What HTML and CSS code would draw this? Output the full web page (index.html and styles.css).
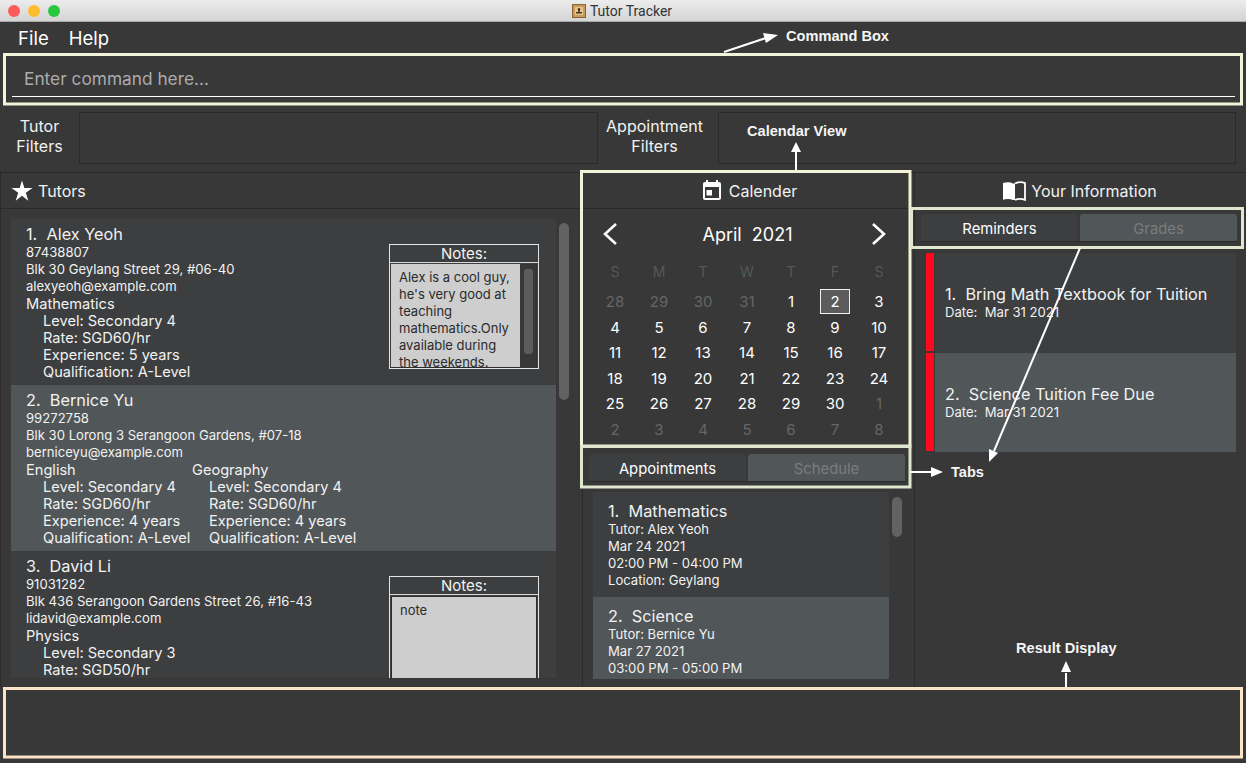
FILE: index.html
```html
<!DOCTYPE html>
<html lang="en">
<head>
  <meta charset="UTF-8" />
  <title>Tutor Tracker</title>
  <link rel="stylesheet" href="styles.css">
</head>
<body>
  <div class="window">
    <div class="titlebar">
      <span class="light red"></span>
      <span class="light yellow"></span>
      <span class="light green"></span>
      <div class="title">
        <svg class="title-icon" width="14" height="14" viewBox="0 0 14 14">
          <rect x="0.5" y="0.5" width="13" height="13" fill="#c99a5b" stroke="#8a6534"/>
          <rect x="3" y="3" width="8" height="8" fill="#e8c690"/>
          <path d="M7 4a1.4 1.4 0 0 1 .8 2.5V8H10v1.5H4V8h2.2V6.5A1.4 1.4 0 0 1 7 4z" fill="#4a3418"/>
        </svg>
        Tutor Tracker
      </div>
    </div>

    <div class="menubar">
      <span>File</span>
      <span>Help</span>
    </div>

    <div class="commandbox">
      <div class="commandinput">Enter command here...</div>
    </div>

    <div class="filters">
      <div class="filter-label tutor-label">Tutor<br>Filters</div>
      <div class="filter-box tutor-box"></div>
      <div class="filter-label appt-label">Appointment<br>Filters</div>
      <div class="filter-box"></div>
    </div>

    <div class="main">
      <section class="col col-tutors">
        <header class="col-head tutors-head">
          <svg width="22" height="22" viewBox="0 0 22 22"><polygon points="11,.5 13.350,8 21.500,8 14.800,12.800 17.300,20.800 11,15.800 4.700,20.800 7.200,12.800 .5,8 8.650,8" fill="#fff"/></svg>
          Tutors
        </header>
        <div class="list tutor-list">
          <div class="cards">
            <article class="card tutor">
              <div class="info">
                <div class="name">1.&nbsp; Alex Yeoh</div>
                <div class="small">87438807</div>
                <div class="small">Blk 30 Geylang Street 29, #06-40</div>
                <div class="small">alexyeoh@example.com</div>
                <div class="subjects">
                  <div class="subject">
                    <div>Mathematics</div>
                    <div class="detail">Level: Secondary 4</div>
                    <div class="detail">Rate: SGD60/hr</div>
                    <div class="detail">Experience: 5 years</div>
                    <div class="detail">Qualification: A-Level</div>
                  </div>
                </div>
              </div>
              <div class="notes">
                <div class="notes-head">Notes:</div>
                <div class="notes-body">
                  <div class="notes-text">Alex is a cool guy, he's very good at teaching mathematics.Only available during the weekends.</div>
                  <div class="notes-track"><div class="notes-thumb"></div></div>
                </div>
              </div>
            </article>

            <article class="card tutor even">
              <div class="info">
                <div class="name">2.&nbsp; Bernice Yu</div>
                <div class="small">99272758</div>
                <div class="small">Blk 30 Lorong 3 Serangoon Gardens, #07-18</div>
                <div class="small">berniceyu@example.com</div>
                <div class="subjects">
                  <div class="subject">
                    <div>English</div>
                    <div class="detail">Level: Secondary 4</div>
                    <div class="detail">Rate: SGD60/hr</div>
                    <div class="detail">Experience: 4 years</div>
                    <div class="detail">Qualification: A-Level</div>
                  </div>
                  <div class="subject">
                    <div>Geography</div>
                    <div class="detail">Level: Secondary 4</div>
                    <div class="detail">Rate: SGD60/hr</div>
                    <div class="detail">Experience: 4 years</div>
                    <div class="detail">Qualification: A-Level</div>
                  </div>
                </div>
              </div>
            </article>

            <article class="card tutor">
              <div class="info">
                <div class="name">3.&nbsp; David Li</div>
                <div class="small">91031282</div>
                <div class="small">Blk 436 Serangoon Gardens Street 26, #16-43</div>
                <div class="small">lidavid@example.com</div>
                <div class="subjects">
                  <div class="subject">
                    <div>Physics</div>
                    <div class="detail">Level: Secondary 3</div>
                    <div class="detail">Rate: SGD50/hr</div>
                  </div>
                </div>
              </div>
              <div class="notes">
                <div class="notes-head">Notes:</div>
                <div class="notes-body single">
                  <div class="notes-text">note</div>
                </div>
              </div>
            </article>
          </div>
          <div class="thumb tutor-thumb"></div>
        </div>
      </section>

      <section class="col col-center">
        <header class="col-head">
          <svg width="24" height="24" viewBox="0 0 24 24"><path d="M12 11H6.500v5.500H12V11zM16 1v2H8V1H6v2H5C3.890 3 3 3.900 3 5v14c0 1.100.89 2 2 2h14c1.100 0 2-.9 2-2V5c0-1.100-.9-2-2-2h-1V1h-2zm3 18H5V8h14v11z" fill="#fff"/></svg>
          Calender
        </header>
        <div class="calendar">
          <div class="month">
            <svg width="16" height="24" viewBox="0 0 16 24"><path d="M14 2L3 12l11 10" fill="none" stroke="#fff" stroke-width="2.600"/></svg>
            <span class="month-name">April&nbsp; 2021</span>
            <svg width="16" height="24" viewBox="0 0 16 24"><path d="M2 2l11 10L2 22" fill="none" stroke="#fff" stroke-width="2.600"/></svg>
          </div>
          <div class="weekdays">
            <span>S</span><span>M</span><span>T</span><span>W</span><span>T</span><span>F</span><span>S</span>
          </div>
          <div class="days">
            <span class="off">28</span><span class="off">29</span><span class="off">30</span><span class="off">31</span><span>1</span><span><b class="today">2</b></span><span>3</span>
            <span>4</span><span>5</span><span>6</span><span>7</span><span>8</span><span>9</span><span>10</span>
            <span>11</span><span>12</span><span>13</span><span>14</span><span>15</span><span>16</span><span>17</span>
            <span>18</span><span>19</span><span>20</span><span>21</span><span>22</span><span>23</span><span>24</span>
            <span>25</span><span>26</span><span>27</span><span>28</span><span>29</span><span>30</span><span class="off">1</span>
            <span class="off">2</span><span class="off">3</span><span class="off">4</span><span class="off">5</span><span class="off">6</span><span class="off">7</span><span class="off">8</span>
          </div>
        </div>
        <div class="tabs center-tabs">
          <div class="tab active">Appointments</div>
          <div class="tab">Schedule</div>
        </div>
        <div class="list appt-list">
          <div class="cards">
            <article class="card appt">
              <div class="name">1.&nbsp; Mathematics</div>
              <div class="small">Tutor: Alex Yeoh</div>
              <div class="small">Mar 24 2021</div>
              <div class="small">02:00 PM - 04:00 PM</div>
              <div class="small">Location: Geylang</div>
            </article>
            <article class="card appt even">
              <div class="name">2.&nbsp; Science</div>
              <div class="small">Tutor: Bernice Yu</div>
              <div class="small">Mar 27 2021</div>
              <div class="small">03:00 PM - 05:00 PM</div>
            </article>
          </div>
          <div class="thumb appt-thumb"></div>
        </div>
      </section>

      <section class="col col-info">
        <header class="col-head info-head">
          <svg width="24" height="20" viewBox="0 0 24 20"><path d="M1 2c3-1.200 7-1.200 10 .5V19c-3-1.400-7-1.400-10-.2V2z" fill="#fff"/><path d="M13 2.500c3-1.700 7-1.700 10-.5v16.800c-3-1.200-7-1.200-10 .2" fill="none" stroke="#fff" stroke-width="1.800"/><path d="M11 2.500h2V19h-2z" fill="#fff"/></svg>
          Your Information
        </header>
        <div class="tabs info-tabs">
          <div class="tab active">Reminders</div>
          <div class="tab">Grades</div>
        </div>
        <div class="reminders">
          <div class="reminder">
            <div class="flag"></div>
            <div class="reminder-body">
              <div class="name">1.&nbsp; Bring Math Textbook for Tuition</div>
              <div class="small">Date:&nbsp; Mar 31 2021</div>
            </div>
          </div>
          <div class="reminder even">
            <div class="flag"></div>
            <div class="reminder-body">
              <div class="name">2.&nbsp; Science Tuition Fee Due</div>
              <div class="small">Date:&nbsp; Mar 31 2021</div>
            </div>
          </div>
        </div>
      </section>
    </div>

    <div class="result"></div>
  </div>

  <!-- annotations drawn on top of the screenshot -->
  <svg class="marks" width="1246" height="763" viewBox="0 0 1246 763">
    <g fill="none" stroke-width="3">
      <rect x="4.500" y="54.500" width="1237" height="49.500" stroke="#f2f3d8"/>
      <rect x="581.500" y="171.500" width="328.500" height="274.500" stroke="#f2f3d8"/>
      <rect x="581.500" y="446.500" width="328.500" height="40.500" stroke="#dfe8cf"/>
      <rect x="911.500" y="208.500" width="331" height="39" stroke="#dfe8cf"/>
      <rect x="4.500" y="688.500" width="1237" height="68.500" stroke="#fbe3c8"/>
    </g>
    <g stroke="#fff" stroke-width="2" fill="#fff">
      <path d="M724 52l42-14" fill="none"/>
      <path d="M778 35l-15-2 3 10z" stroke="none"/>
      <path d="M796 170v-20" fill="none"/>
      <path d="M796 142l-5 10h10z" stroke="none"/>
      <path d="M911 472h22" fill="none"/>
      <path d="M943 472l-12-5v10z" stroke="none"/>
      <path d="M1080 248l-86 203" fill="none"/>
      <path d="M989 462l0-13 9 4z" stroke="none"/>
      <path d="M1066 687v-14" fill="none"/>
      <path d="M1066 661l-5 11h10z" stroke="none"/>
    </g>
  </svg>
  <div class="callout callout-command">Command Box</div>
  <div class="callout callout-calendar">Calendar View</div>
  <div class="callout callout-tabs">Tabs</div>
  <div class="callout callout-result">Result Display</div>
</body>
</html>
```

FILE: styles.css
```css
* {
  box-sizing: border-box;
}

body {
  margin: 0;
  width: 1246px;
  height: 763px;
  overflow: hidden;
  position: relative;
  background-color: #383838;
  font-family: 'Inter', 'Noto Sans', sans-serif;
  color: #f2f2f2;
}

.window {
  display: flex;
  flex-direction: column;
  height: 763px;
}

.titlebar {
  height: 22px;
  flex: none;
  display: flex;
  align-items: center;
  padding-left: 8px;
  gap: 8px;
  background: linear-gradient(#ececec, #d4d4d4);
  border-bottom: 1px solid #a9a9a9;
  position: relative;
}

.light {
  width: 12px;
  height: 12px;
  border-radius: 50%;
}

.red { background-color: #fc5b57; }
.yellow { background-color: #fdbb2e; }
.green { background-color: #27c73f; }

.title {
  flex: 1;
  display: flex;
  align-items: center;
  justify-content: center;
  gap: 4px;
  font-family: 'Roboto', sans-serif;
  font-size: 14px;
  color: #333;
  padding-right: 70px;
}

.menubar {
  height: 31px;
  flex: none;
  display: flex;
  align-items: center;
  gap: 20px;
  padding: 1px 0 0 18px;
  font-size: 18.500px;
  color: #fff;
}

.commandbox {
  height: 53px;
  flex: none;
  padding: 0 11px 0 12px;
}

.commandinput {
  height: 44px;
  padding: 14px 0 0 12px;
  font-size: 17.300px;
  line-height: 24px;
  color: #ababab;
  border-bottom: 1px solid #fff;
}

.filters {
  height: 67px;
  flex: none;
  display: flex;
  padding: 6px 10px 8px 0;
  border-bottom: 1px solid #292929;
}

.filter-label {
  text-align: center;
  font-size: 16px;
  line-height: 20px;
  padding-top: 4px;
}

.tutor-label { width: 79px; }
.appt-label { width: 120px; padding-right: 7px; }

.filter-box {
  flex: 1;
  border: 1px solid #2a2a2a;
}

.tutor-box {
  flex: none;
  width: 519px;
}

.main {
  height: 513px;
  flex: none;
  display: flex;
}

.col {
  display: flex;
  flex-direction: column;
  min-width: 0;
}

.col-tutors { width: 582px; border-left: 1px solid #2a2a2a; }
.col-center { width: 332px; border-left: 1px solid #2a2a2a; }
.col-info { flex: 1; border-left: 1px solid #2a2a2a; }

.col-head {
  height: 36px;
  flex: none;
  display: flex;
  align-items: center;
  justify-content: center;
  gap: 5px;
  font-size: 16px;
  border-bottom: 1px solid #2a2a2a;
}

.tutors-head {
  justify-content: flex-start;
  padding-left: 10px;
}

.info-head { padding-right: 2px; }

.list {
  display: flex;
  overflow: hidden;
}

.cards {
  overflow: hidden;
}

.tutor-list {
  height: 459px;
  margin-top: 10px;
  padding-left: 10px;
}

.tutor-list .cards { width: 545px; }

.card {
  background-color: #3c3e3f;
}

.card.even,
.reminder.even .reminder-body {
  background-color: #515658;
}

.tutor {
  height: 166px;
  flex: none;
  display: flex;
  justify-content: space-between;
  padding: 5px 17px 0 15px;
}

.name {
  font-size: 16.300px;
  line-height: 20px;
}

.small {
  font-size: 13.100px;
  line-height: 17px;
}

.subjects {
  display: flex;
  padding-top: 1px;
  font-size: 14.600px;
  line-height: 17px;
}

.subject { min-width: 166px; }

.detail { padding-left: 17px; }

.notes {
  width: 150px;
  height: 125px;
  margin-top: 20px;
  border: 1px solid #e4e4e4;
  flex: none;
}

.notes-head {
  height: 18px;
  font-size: 15px;
  line-height: 18px;
  text-align: center;
  border-bottom: 1px solid #d8d8d8;
}

.notes-body {
  display: flex;
  height: 104px;
  margin: 1px 1px 0;
  overflow: hidden;
}

.notes-body.single {
  height: 120px;
  background-color: #cdcecd;
  border: 1px solid #2e2e2e;
}

.notes-text {
  flex: 1;
  background-color: #cdcecd;
  color: #2b2b2b;
  font-size: 13px;
  line-height: 17px;
  padding: 5px 8px 0 8px;
  overflow: hidden;
  border-bottom: 1px solid #2e2e2e;
}

.notes-body.single .notes-text {
  border-bottom: none;
}

.notes-track {
  width: 17px;
  flex: none;
  background-color: #383838;
  padding: 5px 4px 0;
}

.notes-thumb {
  width: 9px;
  height: 85px;
  background-color: #5c5c5c;
  border-radius: 3px;
}

.thumb {
  width: 10px;
  flex: none;
  background-color: #626262;
  border-radius: 5px;
}

.tutor-thumb {
  height: 177px;
  margin: 4px 0 0 3px;
}

.calendar {
  height: 238px;
  flex: none;
  padding: 0 11px 0 10px;
}

.month {
  height: 50px;
  display: flex;
  align-items: center;
  justify-content: space-between;
  padding: 0 16px 0 9px;
  font-size: 18px;
  color: #fff;
}

.month-name { margin-left: 6px; }

.weekdays,
.days {
  display: grid;
  grid-template-columns: repeat(7, 44px);
  text-align: center;
}

.weekdays {
  height: 25px;
  line-height: 25px;
  font-size: 14px;
  color: #575757;
}

.days {
  grid-auto-rows: 25.600px;
  margin-top: 5px;
  font-size: 15px;
  line-height: 25.600px;
  color: #fff;
}

.days .off { color: #666; }

.today {
  display: inline-block;
  width: 30px;
  height: 25px;
  line-height: 23px;
  font-weight: normal;
  background-color: #5c5c5c;
  border: 1px solid #f0f0f0;
}

.tabs {
  flex: none;
  display: flex;
  gap: 2px;
  border-bottom: 1px solid #2a2a2a;
}

.tab {
  flex: 1;
  height: 27px;
  line-height: 31px;
  text-align: center;
  font-size: 14.800px;
  color: #7c7c7c;
  background-color: #515658;
  border-radius: 3px 3px 0 0;
}

.tab.active {
  color: #fff;
  background-color: #3c3e3f;
}

.center-tabs {
  margin: 7px 9px 0 6px;
}

.appt-list {
  height: 187px;
  margin-top: 10px;
  padding-left: 10px;
}

.appt-list .cards { width: 296px; }

.appt {
  height: 105px;
  padding: 9px 0 0 15px;
}

.appt-thumb {
  height: 40px;
  margin: 5px 0 0 3px;
}

.info-tabs {
  margin: 5px 9px 0 6px;
}

.reminders {
  margin: 11px 10px 0 11px;
}

.reminder {
  height: 99.500px;
  display: flex;
}

.flag {
  width: 8px;
  height: 98px;
  margin: 0 1px 1px 0;
  flex: none;
  background-color: #ff0a1c;
}

.reminder-body {
  flex: 1;
  background-color: #3c3e3f;
  display: flex;
  flex-direction: column;
  justify-content: center;
  padding: 0 0 0 10px;
}

.result {
  flex: 1;
}

/* overlay: annotation boxes, arrows and their captions */
.marks {
  position: absolute;
  top: 0;
  left: 0;
  pointer-events: none;
}

.callout {
  position: absolute;
  font-family: 'Liberation Sans', sans-serif;
  font-weight: bold;
  font-size: 14.600px;
  line-height: 16px;
  color: #f5f5f5;
  white-space: nowrap;
}

.callout-command { left: 786px; top: 28px; }
.callout-calendar { left: 747px; top: 123px; }
.callout-tabs { left: 951px; top: 464px; }
.callout-result { left: 1016px; top: 640px; }
```
